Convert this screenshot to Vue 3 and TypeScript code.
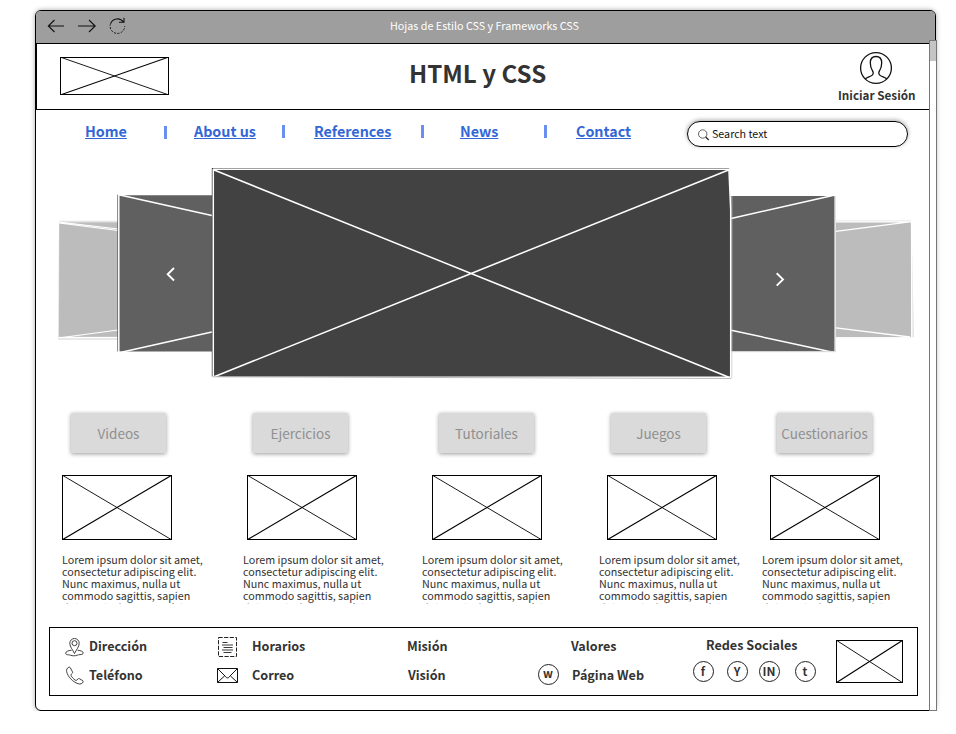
<script setup lang="ts">
interface Box { w: number; h: number }
const logo: Box = { w: 109, h: 38 }
const thumb: Box = { w: 110, h: 65 }
const badge: Box = { w: 67, h: 43 }

const links = ['Home', 'About us', 'References', 'News', 'Contact']
const sections = ['Videos', 'Ejercicios', 'Tutoriales', 'Juegos', 'Cuestionarios']
const text =
  'Lorem ipsum dolor sit amet, consectetur adipiscing elit. Nunc maximus, nulla ut commodo sagittis, sapien dui mattis dui, non pulvinar lorem felis nec erat'
const networks = ['f', 'Y', 'IN', 't']
</script>

<template>
  <div class="window">
    <header class="titlebar">
      <svg class="nav-icons" width="90" height="24" viewBox="0 0 90 24" fill="none" stroke="#111" stroke-width="1.1">
        <path d="M17 12H1.5M7.5 6 1.3 12l6.2 6" />
        <path d="M31 12h17M42 6l6.2 6-6.2 6" />
        <path d="M76.5 8.2A7.3 7.3 0 0 0 63.6 9.5M77 3.800v4.500h-5" />
        <path d="M63.6 9.500A7.300 7.300 0 1 0 77.7 12" stroke-dasharray="2.2 1.3" stroke-width=".9" />
      </svg>
      <span class="title">Hojas de Estilo CSS y Frameworks CSS</span>
    </header>

    <div class="body">
      <div class="page">
        <section class="hero">
          <svg class="cross" :width="logo.w" :height="logo.h">
            <rect x=".5" y=".5" :width="logo.w - 1" :height="logo.h - 1" />
            <path :d="`M0 0L${logo.w} ${logo.h}`" class="thin" />
            <path :d="`M0 ${logo.h}L${logo.w} 0`" />
          </svg>
          <h1>HTML y CSS</h1>
          <div class="login">
            <svg width="34" height="34" viewBox="0 0 34 34" fill="none" stroke="#111" stroke-width="1.3">
              <circle cx="17" cy="17" r="15.4" />
              <path d="M6.2 28c1.5-1.9 5.800-2.300 7.300-4.200 1.100-1.500.5-3.500-.3-4.700-1.200-1.900-1.900-4.300-1.900-7.300 0-4 2.200-6.300 5.700-6.300s5.700 2.300 5.700 6.300c0 3-.7 5.400-1.900 7.300-.8 1.200-1.400 3.200-.3 4.700 1.500 1.900 5.800 2.300 7.300 4.200" />
            </svg>
            <span>Iniciar Sesión</span>
          </div>
        </section>

        <div class="menu">
          <nav>
            <template v-for="(l, i) in links" :key="l">
              <i v-if="i" class="bar" :class="{ low: i === 1 }"></i>
              <a>{{ l }}</a>
            </template>
          </nav>
          <div class="search">
            <svg width="12" height="12" viewBox="0 0 12 12" fill="none" stroke="#222" stroke-width=".7">
              <circle cx="4.700" cy="5" r="4.200" />
              <path d="m7.700 8 3 3" stroke-width="1.3" />
            </svg>
            <span>Search text</span>
          </div>
        </div>

        <svg class="carousel" width="893" height="220" viewBox="36 162 893 220" fill="none">
          <g>
            <path fill="#e2e2e2" d="M59 220.700H118V339.700H58z" />
            <path fill="#bcbcbc" d="M59.300 222.500H118V336.800H59z" />
            <path stroke="#fff" stroke-width="1.2" d="M59 222l59 7M59 223l59 7.500M58.500 338l59.500-8M58.500 337.700H118" />
          </g>
          <g>
            <path fill="#e2e2e2" d="M836 220.600H911.500L914 337.300H836z" />
            <path fill="#bcbcbc" d="M836 222H911V337H836z" />
            <path stroke="#fff" stroke-width="1.3" d="M836 231.300l75.500-9.700M836 327.800l74 9.200M836 221.800h75.500L911.800 337" />
          </g>
          <g>
            <path fill="#606060" d="M117.300 194.500L119 195.200H213V351.500H117.300z" />
            <path stroke="#fff" stroke-width="1.5" d="M118.800 194.800V352M118.800 194.800l94.200 20.900M119 352.800l94-21" />
          </g>
          <g>
            <path fill="#606060" d="M730 196H834.500V351.500H730z" />
            <path stroke="#fff" stroke-width="1.5" d="M730 218.700l104-23.500M730 330l104 22.500" />
            <path stroke="#ddd" d="M835.300 196V352M731 351.700h104" />
          </g>
          <g>
            <path fill="#424242" d="M211.800 168H729L730.200 195.500V376.600H211.800z" />
            <path stroke="#fff" stroke-width="1.5" d="M213.300 169V377M213 169.300H729M213.500 169.800L729.500 377.500M213.500 377L728.500 170M728.9 169L730.7 210V377.500" />
            <path stroke="#ccc" stroke-width=".8" d="M731.8 196V378.400" />
            <path stroke="#aaa" stroke-width=".8" d="M213 376.800L731 378.500" />
          </g>
          <path stroke="#fff" stroke-width="1.9" d="M174 268l-6.300 6.300 6.300 6.200M776.700 273.200l6.300 6.200-6.300 6.200" />
        </svg>

        <div class="buttons">
          <button v-for="s in sections" :key="s" type="button">{{ s }}</button>
        </div>

        <div class="thumbs">
          <svg v-for="s in sections" :key="s" class="cross" :width="thumb.w" :height="thumb.h">
            <rect x=".5" y=".5" :width="thumb.w - 1" :height="thumb.h - 1" />
            <path :d="`M0 0L${thumb.w} ${thumb.h}`" class="thin" />
            <path :d="`M0 ${thumb.h}L${thumb.w} 0`" />
          </svg>
        </div>

        <div class="texts">
          <p v-for="s in sections" :key="s">{{ text }}</p>
        </div>

        <footer>
          <div class="col c1">
            <div class="item">
              <svg width="20" height="20" viewBox="0 0 20 20" fill="none" stroke="#222" stroke-width=".85">
                <path d="M9.5 16.500C7.800 12.800 4.800 10 4.800 6.200a4.700 4.700 0 0 1 9.400 0c0 3.800-3 6.600-4.700 10.300z" />
                <circle cx="9.5" cy="6.2" r="2.5" />
                <path d="M6.500 13.300c-3.300.2-5.800 1.200-5.800 2.900 0 1.100 1.200 1.600 2.700 1.600 2 0 2.700 1 5.400 1 2.900 0 4-1.200 6.200-1.200 1.700 0 3.200-.4 3.200-1.700 0-1.500-2.400-2.400-5.600-2.600" />
              </svg>
              <b>Dirección</b>
            </div>
            <div class="item">
              <svg width="20" height="20" viewBox="0 0 20 20" fill="none" stroke="#222" stroke-width=".85">
                <path d="M3.900 1.200C2 2 1.200 3.600 1.700 5.800c1.200 5 5.900 10 11.300 11.900 2.400.8 4.300 0 5.100-1.800.2-.6 0-1-.4-1.300l-3.400-1.900c-.6-.3-1.100-.2-1.500.3l-1 1.200c-.5.4-1 .3-1.500 0-1.700-1.100-3.400-2.900-4.200-4.600-.3-.6-.2-1 .2-1.400l1-.9c.4-.4.4-.9.2-1.400L5.300 1.700c-.3-.5-.8-.7-1.400-.5z" />
              </svg>
              <b>Teléfono</b>
            </div>
          </div>
          <div class="col c2">
            <div class="item">
              <svg width="22" height="20" viewBox="0 0 22 20" fill="none" stroke="#222" stroke-width="1">
                <path d="M1.500.5h18v19h-18z" stroke-dasharray="4.2 1.4" />
                <path d="M5.500 5.500h5M5 8h11M6.500 10.500h9M5 13h11M6.500 15.500h8" stroke-width=".9" />
              </svg>
              <b>Horarios</b>
            </div>
            <div class="item">
              <svg width="22" height="16" viewBox="0 0 22 16" fill="none" stroke="#111" stroke-width="1">
                <path d="M.5.5h20v14H.5zM.5.5l7.500 7.500c1.500 2.500 3.500 2.500 5 0l7.500-7.500M.5 14.500 7.500 8M20.500 14.500 13.500 8" />
              </svg>
              <b>Correo</b>
            </div>
          </div>
          <div class="col c3">
            <div class="item"><b>Misión</b></div>
            <div class="item second"><b>Visión</b></div>
          </div>
          <div class="col c4">
            <div class="item"><b>Valores</b></div>
            <div class="item"><span class="round">w</span><b>Página Web</b></div>
          </div>
          <div class="social">
            <b>Redes Sociales</b>
            <div class="nets">
              <span v-for="n in networks" :key="n" class="round" :class="'n-' + n.toLowerCase()">{{ n }}</span>
            </div>
          </div>
          <svg class="cross badge" :width="badge.w" :height="badge.h">
            <rect x=".5" y=".5" :width="badge.w - 1" :height="badge.h - 1" />
            <path :d="`M0 0L${badge.w} ${badge.h}`" class="thin" />
            <path :d="`M0 ${badge.h}L${badge.w} 0`" />
          </svg>
        </footer>
      </div>
      <div class="scrollbar"><div class="thumb"></div></div>
    </div>
  </div>
</template>

<style>
body {
  background: #fff;
}
</style>

<style scoped>
* {
  box-sizing: border-box;
}
.window {
  width: 901px;
  height: 701px;
  margin: 10px 0 0 35px;
  border: 1px solid #000;
  border-radius: 6px;
  box-shadow: 0 0 5px rgba(0, 0, 0, 0.35);
  font-family: 'Noto Sans CJK SC', 'Open Sans', sans-serif;
  color: #333;
  background: #fff;
}
svg {
  display: block;
  flex: none;
}
.titlebar {
  display: flex;
  height: 32px;
  background: #9e9e9e;
  border-radius: 5px 5px 0 0;
}
.nav-icons {
  margin: 3px 0 0 11px;
}
.title {
  margin-left: 253px;
  font-size: 10.75px;
  line-height: 29px;
  color: #fff;
  white-space: nowrap;
}
.body {
  display: flex;
  height: 667px;
}
.page {
  width: 894px;
  flex: none;
}
.hero {
  display: flex;
  height: 67px;
  border: 1px solid #000;
}
.cross {
  fill: none;
  stroke: #000;
  stroke-width: 1;
}
.cross path {
  stroke-width: 1.1;
}
.cross .thin {
  stroke-width: 0.9;
}
.hero .cross {
  margin: 13px 0 0 23px;
}
h1 {
  margin: 0 0 0 240px;
  width: 140px;
  font-size: 24.1px;
  line-height: 58px;
  font-weight: 700;
  white-space: nowrap;
}
.login {
  display: flex;
  flex-direction: column;
  width: 90px;
  margin: 7px 0 0 285px;
  font-size: 11.7px;
  line-height: 16px;
  font-weight: 700;
  white-space: nowrap;
}
.login svg {
  margin-left: 25px;
}
.login span {
  margin: 2px 0 0 4px;
}
.menu {
  display: flex;
  height: 52px;
}
nav {
  display: grid;
  grid-template-columns: 79px 30px 88px 32px 107px 39px 84px 32px 60px;
  width: 551px;
  margin: 11px 0 0 49px;
  font-size: 14.3px;
  line-height: 20px;
  font-weight: 700;
}
nav a {
  color: #3367d6;
  text-decoration: underline;
  text-decoration-thickness: 1px;
  text-underline-offset: 1px;
  white-space: nowrap;
}
.bar {
  width: 3px;
  height: 13px;
  margin-top: 4px;
  background: #6a8fee;
}
.bar.low {
  margin-top: 5px;
}
.search {
  display: flex;
  width: 221px;
  height: 26px;
  margin: 11px 0 0 51px;
  padding-left: 10px;
  border: 1px solid #000;
  border-radius: 13px;
  box-shadow: 0 -1px 4px rgba(0, 0, 0, 0.35);
  font-size: 10.7px;
  line-height: 24px;
  color: #111;
}
.search svg {
  margin: 7px 2px 0 0;
}
.buttons {
  display: grid;
  grid-template-columns: 182px 186px 172px 166px 97px;
  margin: 31px 0 0 35px;
}
button {
  width: 95px;
  height: 40px;
  padding: 0;
  border: 0;
  border-radius: 1px;
  background: #dadada;
  box-shadow: 0 1px 4px rgba(0, 0, 0, 0.4);
  color: #8f8f8f;
  font: 13.5px/41px 'Noto Sans CJK SC', 'Open Sans', sans-serif;
  white-space: nowrap;
}
.thumbs {
  display: grid;
  grid-template-columns: 185px 185px 175px 163px 110px;
  margin: 22px 0 0 26px;
}
.texts {
  display: grid;
  grid-template-columns: 181px 179px 177px 163px 150px;
  margin: 14px 0 0 26px;
}
p {
  width: 146px;
  height: 50px;
  margin: 0;
  overflow: hidden;
  font-size: 10.75px;
  line-height: 12px;
}
footer {
  display: flex;
  width: 869px;
  height: 69px;
  margin: 23px 0 0 13px;
  border: 1px solid #000;
}
.col {
  display: grid;
  grid-template-rows: 29px 29px;
  height: 62px;
  padding-top: 4px;
}
.item {
  display: flex;
  align-items: center;
}
b {
  font-size: 12.6px;
  line-height: 16px;
  white-space: nowrap;
}
.item b {
  margin-bottom: 2px;
}
.c1 {
  width: 152px;
  padding-left: 15px;
}
.c1 b {
  margin-left: 4px;
}
.c2 {
  width: 205px;
  padding-left: 15px;
}
.c2 b {
  margin-left: 13px;
}
.c3 {
  width: 130.5px;
}
.c3 .second {
  padding-left: 1px;
}
.c4 {
  width: 155px;
}
.c4 .item:first-child {
  padding-left: 33.5px;
}
.round {
  width: 21px;
  height: 21px;
  border: 1px solid #222;
  border-radius: 50%;
  font-size: 11.5px;
  line-height: 18px;
  font-weight: 700;
  text-align: center;
}
.c4 .round {
  margin: 0 13.5px 2px 0;
  line-height: 17px;
}
.social {
  width: 143.5px;
  padding-top: 9px;
}
.social b {
  display: block;
  margin-left: 13.5px;
}
.nets {
  display: grid;
  grid-template-columns: 34px 32px 36px 21px;
  margin-top: 8px;
}
.nets .n-in {
  font-size: 12px;
  line-height: 17px;
}
.badge {
  margin-top: 12px;
}
.scrollbar {
  width: 8px;
  height: 671px;
  flex: none;
  margin: -3px -2px 0 -1px;
  border: 1px solid #777;
  background: #fff;
}
.thumb {
  height: 20px;
  background: #c4c4c4;
}
</style>
